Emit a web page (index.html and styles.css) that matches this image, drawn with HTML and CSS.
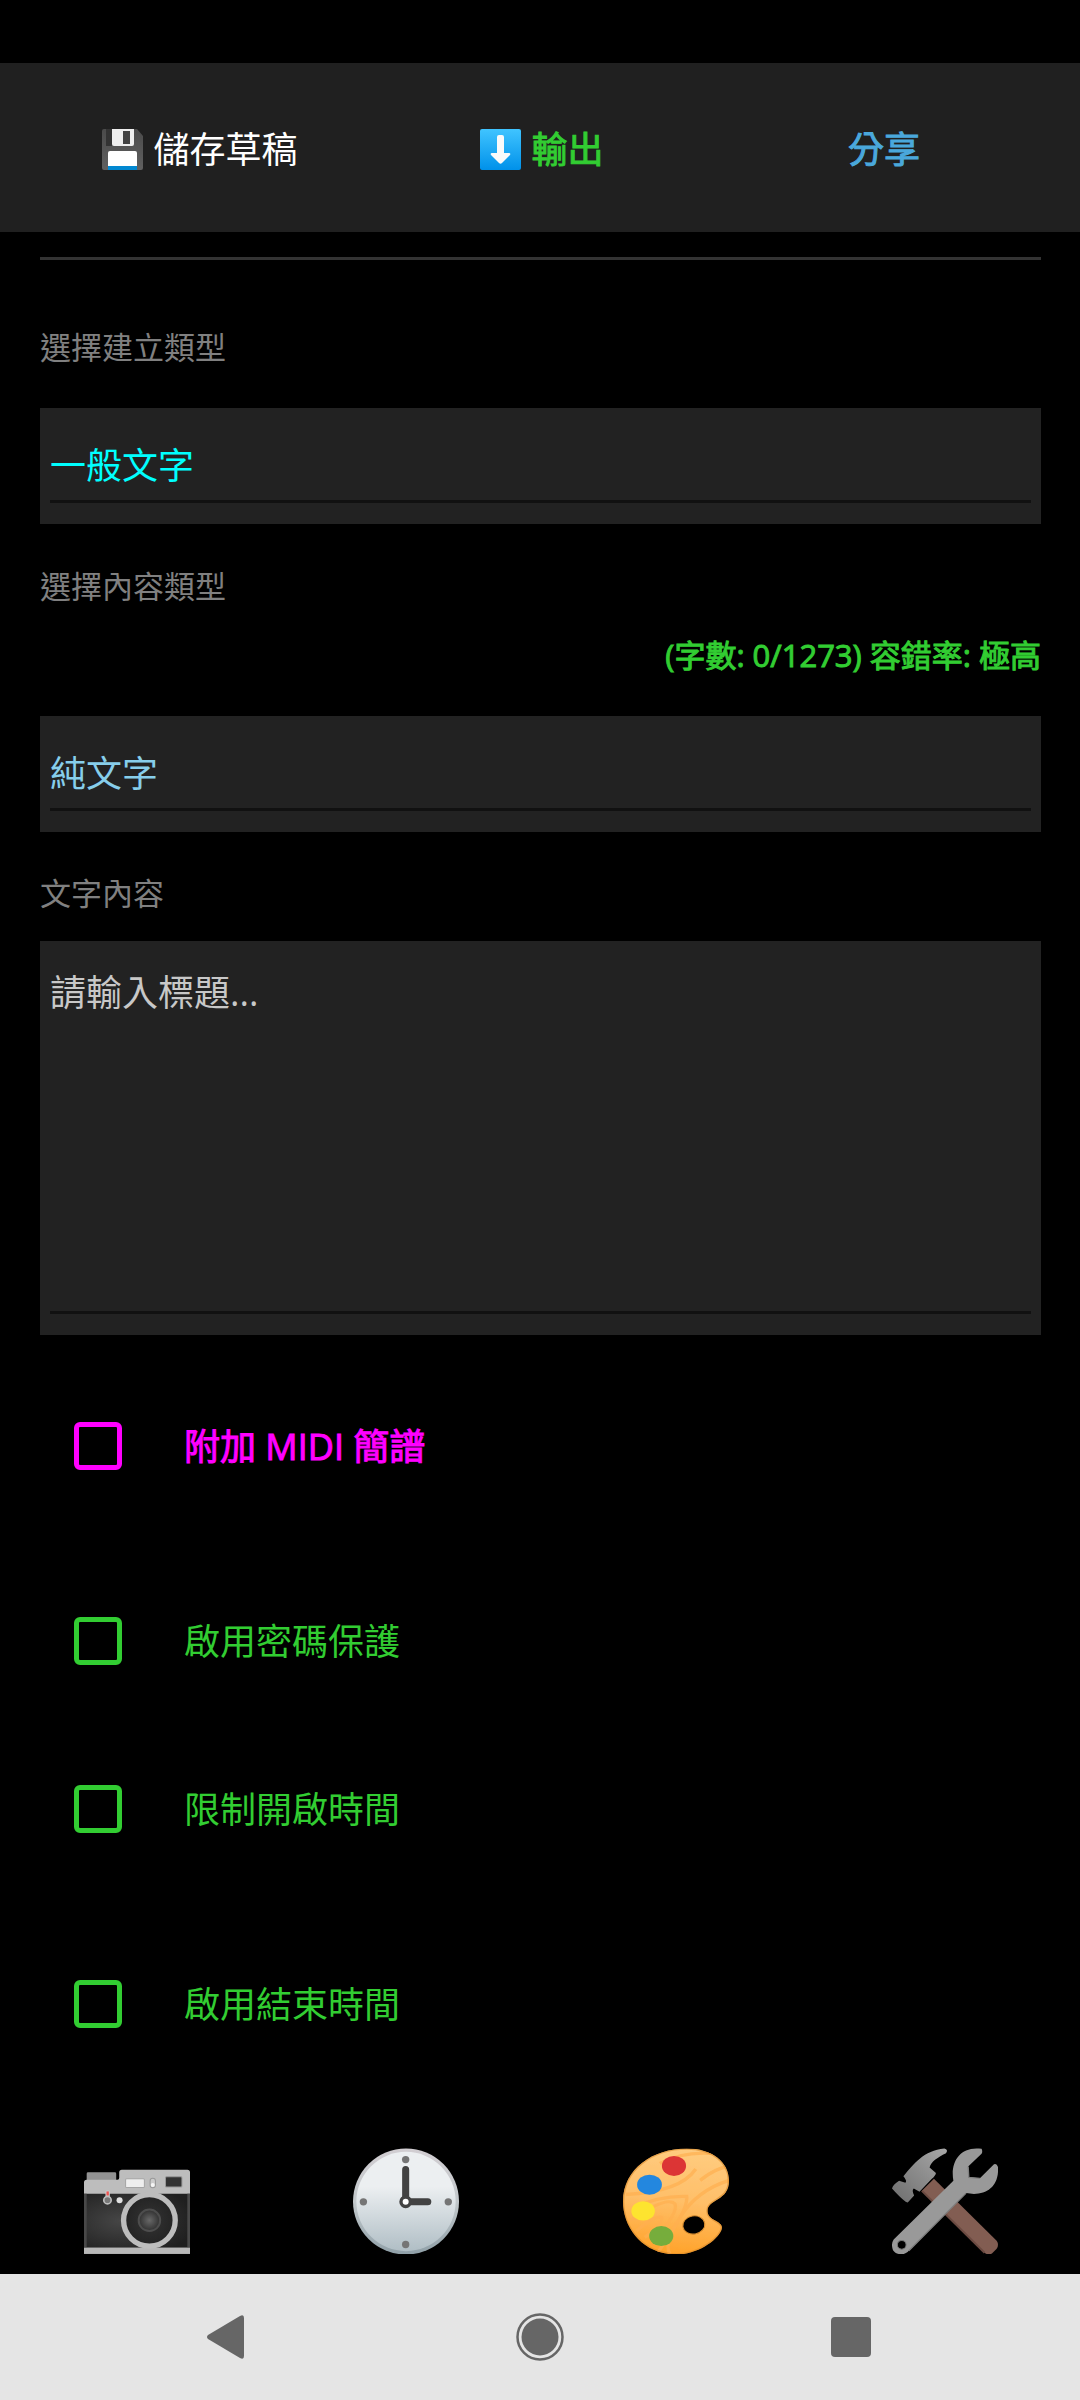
FILE: index.html
```
<!DOCTYPE html>
<html lang="zh-Hant">
<head>
    <meta charset="UTF-8">
    <meta name="viewport" content="width=device-width, initial-scale=1.0">
    <title>建立文字</title>
    <link rel="stylesheet" href="styles.css">
</head>
<body>
    <header class="toolbar">
        <button type="button" class="save">
            <svg class="emoji" viewBox="0 0 41 41" aria-hidden="true">
                <defs>
                    <linearGradient id="disk" x1="0" y1="0" x2="0" y2="1">
                        <stop offset="0" stop-color="#4b4b4b"/>
                        <stop offset="1" stop-color="#606060"/>
                    </linearGradient>
                </defs>
                <path d="M2 0h33l6 7v32q0 2-2 2H2q-2 0-2-2V2q0-2 2-2z" fill="url(#disk)"/>
                <path d="M4 0h6v17H4z" fill="#333"/>
                <path d="M10 0h22v15q0 2-2 2H12q-2 0-2-2z" fill="#eee"/>
                <path d="M21 2h7v13h-7z" fill="#424242"/>
                <path d="M8 22h25q2 0 2 2v13H6V24q0-2 2-2z" fill="#fff"/>
                <path d="M6 37h29v4H6z" fill="#0288d1"/>
            </svg>
            <span>儲存草稿</span>
        </button>
        <button type="button" class="export">
            <svg class="emoji" viewBox="0 0 41 41" aria-hidden="true">
                <defs>
                    <linearGradient id="arrow" x1="0" y1="0" x2="0" y2="1">
                        <stop offset="0" stop-color="#40c4ff"/>
                        <stop offset="1" stop-color="#0091ea"/>
                    </linearGradient>
                </defs>
                <rect width="41" height="41" rx="2" fill="url(#arrow)"/>
                <path d="M17 8q0-2 2-2h3q2 0 2 2v16h5q2 0 1 2l-8 8q-1.500 1.500-3 0l-8-8q-1-2 1-2h5z" fill="#fafafa"/>
            </svg>
            <span>輸出</span>
        </button>
        <button type="button" class="share">分享</button>
    </header>

    <main class="content">
        <hr class="divider">

        <label class="caption" for="createType">選擇建立類型</label>
        <div class="field">
            <select id="createType" class="create-type">
                <option>一般文字</option>
            </select>
        </div>

        <label class="caption second" for="contentType">選擇內容類型</label>
        <p class="counter">(字數: 0/1273) 容錯率: 極高</p>
        <div class="field">
            <select id="contentType" class="content-type">
                <option>純文字</option>
            </select>
        </div>

        <label class="caption third" for="textContent">文字內容</label>
        <div class="field">
            <textarea id="textContent" placeholder="請輸入標題..."></textarea>
        </div>

        <div class="options">
            <label class="option midi"><input type="checkbox"><span>附加 MIDI 簡譜</span></label>
            <div class="option-group">
                <label class="option"><input type="checkbox"><span>啟用密碼保護</span></label>
                <label class="option"><input type="checkbox"><span>限制開啟時間</span></label>
            </div>
            <label class="option"><input type="checkbox"><span>啟用結束時間</span></label>
        </div>
    </main>

    <nav class="tabs">
        <button type="button" aria-label="相機">
            <svg viewBox="70 84 316 315" aria-hidden="true">
                <defs>
                    <radialGradient id="body" cx=".35" cy=".5" r=".7">
                        <stop offset="0" stop-color="#464646"/>
                        <stop offset="1" stop-color="#1f1f1f"/>
                    </radialGradient>
                    <radialGradient id="glass">
                        <stop offset="0" stop-color="#555"/>
                        <stop offset=".45" stop-color="#2c2c2c"/>
                        <stop offset="1" stop-color="#232323"/>
                    </radialGradient>
                    <radialGradient id="core">
                        <stop offset="0" stop-color="#686868"/>
                        <stop offset="1" stop-color="#303030"/>
                    </radialGradient>
                </defs>
                <rect x="78" y="156" width="88" height="30" rx="4" fill="#929292"/>
                <path d="M70 186q0-8 8-8h92q5 0 5-6v-16q0-8 8-8h195q8 0 8 8v243H70z" fill="#bdbdbd"/>
                <path d="M70 220h316v161H70z" fill="url(#body)"/>
                <path d="M74 220v161M382 220v161" stroke="#484848" stroke-width="8"/>
                <path d="M70 381h316v18H70z" fill="#b8b8b8"/>
                <circle cx="265" cy="299" r="77" fill="url(#glass)" stroke="#bdbdbd" stroke-width="16"/>
                <circle cx="265" cy="299" r="32" fill="url(#core)" stroke="#4d4d4d" stroke-width="6"/>
                <rect x="194" y="175" width="56" height="26" rx="3" fill="#eee" stroke="#a5a5a5" stroke-width="3"/>
                <rect x="267" y="174" width="16" height="28" rx="8" fill="#ccc" stroke="#999" stroke-width="3"/>
                <circle cx="275" cy="194" r="6" fill="#f5f5f5"/>
                <rect x="313" y="169" width="49" height="31" rx="3" fill="#333" stroke="#999" stroke-width="3"/>
                <rect x="134" y="210" width="13" height="24" rx="4" fill="#ccc"/>
                <circle cx="140" cy="239" r="11" fill="#777" stroke="#bdbdbd" stroke-width="5"/>
                <rect x="137" y="213" width="7" height="12" fill="#ef5350"/>
                <circle cx="176" cy="239" r="9" fill="#e0e0e0"/>
            </svg>
        </button>
        <button type="button" aria-label="時間">
            <svg viewBox="70 84 316 315" aria-hidden="true">
                <defs>
                    <linearGradient id="dial" x1="0" y1="0" x2="0" y2="1">
                        <stop offset=".35" stop-color="#eceff1"/>
                        <stop offset="1" stop-color="#b0bec5"/>
                    </linearGradient>
                    <linearGradient id="rim" x1="0" y1="0" x2="0" y2="1">
                        <stop offset="0" stop-color="#d2ced2"/>
                        <stop offset=".5" stop-color="#c2c8cb"/>
                        <stop offset="1" stop-color="#90a0a8"/>
                    </linearGradient>
                </defs>
                <circle cx="228" cy="243" r="158" fill="url(#rim)"/>
                <circle cx="228" cy="243" r="148" fill="url(#dial)"/>
                <g fill="#757575">
                    <circle cx="227" cy="118" r="11"/>
                    <circle cx="354" cy="244" r="11"/>
                    <circle cx="227" cy="371" r="11"/>
                    <circle cx="101" cy="244" r="11"/>
                </g>
                <path d="M227 148v96h66" fill="none" stroke="#424242" stroke-width="21" stroke-linecap="round"/>
                <circle cx="227" cy="244" r="14" fill="#fff" stroke="#424242" stroke-width="10"/>
            </svg>
        </button>
        <button type="button" aria-label="色彩">
            <svg viewBox="70 84 316 315" aria-hidden="true">
                <defs>
                    <linearGradient id="wood" x1=".6" y1="0" x2=".5" y2="1">
                        <stop offset="0" stop-color="#ffcc80"/>
                        <stop offset=".5" stop-color="#ffbf69"/>
                        <stop offset="1" stop-color="#ffa32b"/>
                    </linearGradient>
                    <clipPath id="board">
                        <path d="M260 85C335 85 386 125 386 181C386 242 322 235 322 271C322 300 365 300 365 320C365 348 300 401 230 401C130 401 70 322 70 243C70 145 160 85 260 85z"/>
                    </clipPath>
                </defs>
                <g clip-path="url(#board)">
                    <path d="M70 84h316v316H70z" fill="url(#wood)"/>
                    <g fill="none" stroke="#ffb050" stroke-width="10" opacity=".7">
                        <path d="M78 222Q240 215 287 146"/>
                        <path d="M100 262Q180 225 260 228Q265 270 170 400"/>
                        <path d="M90 300Q200 225 225 250Q235 280 165 350"/>
                        <path d="M386 180Q290 210 240 290T210 400"/>
                        <path d="M300 180Q350 140 386 140"/>
                        <path d="M180 130Q250 92 340 100"/>
                        <path d="M110 330Q165 285 185 290Q190 310 135 350"/>
                    </g>
                    <path d="M260 85C335 85 386 125 386 181C386 242 322 235 322 271C322 300 365 300 365 320C365 348 300 401 230 401C130 401 70 322 70 243C70 145 160 85 260 85z" fill="none" stroke="#d8882a" stroke-width="8" opacity=".6"/>
                </g>
                <ellipse cx="281" cy="313" rx="33" ry="27" fill="#000" stroke="#dd9030" stroke-width="3" transform="rotate(-10 281 313)"/>
                <ellipse cx="222" cy="137" rx="36" ry="30" fill="#dc3535"/>
                <ellipse cx="149" cy="193" rx="37" ry="30" fill="#2387df"/>
                <ellipse cx="130" cy="271" rx="35" ry="29" fill="#fde42f"/>
                <ellipse cx="184" cy="346" rx="36" ry="30" fill="#76ad3c"/>
            </svg>
        </button>
        <button type="button" aria-label="工具">
            <svg viewBox="70 84 316 315" aria-hidden="true">
                <defs>
                    <linearGradient id="head" x1="1" y1="0" x2="0" y2="1">
                        <stop offset="0" stop-color="#a8a8a8"/>
                        <stop offset="1" stop-color="#6d6d6d"/>
                    </linearGradient>
                </defs>
                <path d="M159 211L195 175L382 360Q390 372 382 384L368 398Q356 404 346 396z" fill="#825d52"/>
                <path d="M159 211L346 396" stroke="#6b4a41" stroke-width="6"/>
                <path d="M104 168C135 130 165 91 226 85Q239 88 231 99C205 112 186 124 182 142L201 158Q200 166 188 176L152 214L135 204Q128 208 136 225L117 246Q108 246 70 204Q72 194 91 181L110 187Q116 182 104 168z" fill="url(#head)"/>
                <path d="M337 86Q341 94 337 101L297 139L299 171L332 174L374 132Q382 128 386 140C390 202 346 229 291 218L120 390C106 406 82 402 73 388Q66 370 75 356L253 181C243 126 272 77 337 86z" fill="#999"/>
                <path d="M297 139L299 171L332 174M291 218L120 390" fill="none" stroke="#808080" stroke-width="4"/>
                <circle cx="99" cy="372" r="13" fill="#000" stroke="#777" stroke-width="3"/>
            </svg>
        </button>
    </nav>

    <footer class="system-nav">
        <button type="button" aria-label="返回">
            <svg viewBox="0 0 48 48" aria-hidden="true">
                <path d="M37 3q4-2 4 2v38q0 4-4 2L5 26q-2-2 0-4z"/>
            </svg>
        </button>
        <button type="button" aria-label="首頁">
            <svg viewBox="0 0 48 48" aria-hidden="true">
                <circle cx="24" cy="24" r="22.500" fill="none" stroke="#666" stroke-width="2.500"/>
                <circle cx="24" cy="24" r="18.500"/>
            </svg>
        </button>
        <button type="button" aria-label="最近使用">
            <svg viewBox="0 0 48 48" aria-hidden="true">
                <rect x="2" y="4" width="40" height="40" rx="4"/>
            </svg>
        </button>
    </footer>
</body>
</html>
```
FILE: styles.css
```
* {
    box-sizing: border-box;
}

body {
    margin: 0;
    min-height: 100vh;
    padding-top: 63px;
    display: flex;
    flex-direction: column;
    background-color: #000;
    color: #32cd32;
    font-family: "Open Sans", "Noto Sans CJK TC", sans-serif;
    font-size: 36px;
    line-height: 48px;
}

button,
select,
textarea {
    margin: 0;
    padding: 0;
    border: none;
    border-radius: 0;
    background: none;
    color: inherit;
    font: inherit;
}

button {
    display: flex;
    align-items: center;
    justify-content: center;
    cursor: pointer;
}

/* top actions */
.toolbar {
    display: grid;
    grid-template-columns: repeat(3, 1fr);
    height: 169px;
    padding: 4px 25px 0 29px;
    background-color: #202020;
}

.toolbar button {
    gap: 10px;
}

.emoji {
    width: 41px;
    height: 41px;
}

/* slightly heavier than regular, lighter than the bold cut */
.export,
.share,
.counter,
.midi {
    -webkit-text-stroke: 1px currentColor;
}

.toolbar .save {
    color: #fff;
}

.toolbar .export {
    color: #32cd32;
}

.toolbar .share {
    color: #4aa8dc;
}

/* form */
.content {
    flex: 1;
    padding: 25px 39px 0 40px;
}

.divider {
    height: 3px;
    margin: 0 0 66px;
    border: none;
    background-color: #333;
}

.caption {
    display: block;
    margin-bottom: 40px;
    color: #808080;
    font-size: 31px;
    line-height: 42px;
}

.caption.second {
    margin: 41px 0 27px;
}

.caption.third {
    margin: 40px 0 27px;
}

.counter {
    margin: 0 0 40px;
    font-size: 31px;
    line-height: 42px;
    text-align: right;
}

.field {
    padding: 0 10px 21px;
    background-color: #222;
}

.field select,
.field textarea {
    display: block;
    width: 100%;
    border-bottom: 3px solid #111;
    outline: none;
    appearance: none;
}

.field select {
    height: 95px;
    padding-top: 24px;
}

.field textarea {
    height: 373px;
    padding-top: 28px;
    resize: none;
}

.field textarea::placeholder {
    color: #c8c8c8;
    opacity: 1;
}

.field .create-type {
    color: #0ff;
}

.field .content-type {
    color: #87ceeb;
}

/* check boxes */
.options {
    display: flex;
    flex-direction: column;
    gap: 27px;
    padding: 27px 34px 39px;
}

.option {
    display: flex;
    align-items: center;
    gap: 62px;
    height: 168px;
}

.option.midi {
    color: #f0f;
}

.option input {
    width: 48px;
    height: 48px;
    margin: 0;
    border: 5px solid currentColor;
    border-radius: 6px;
    color: inherit;
    appearance: none;
}

.option input:checked {
    background-color: currentColor;
}

.option span {
    padding-top: 2px;
}

/* bottom bars */
.tabs {
    display: grid;
    grid-template-columns: repeat(4, 1fr);
    height: 147px;
    padding-left: 2px;
}

.tabs svg {
    width: 106px;
    height: 106px;
}

.system-nav {
    display: grid;
    grid-template-columns: repeat(3, 1fr);
    height: 126px;
    padding: 0 70px;
    background-color: #e5e5e5;
}

.system-nav svg {
    width: 48px;
    height: 48px;
    fill: #666;
}
```
